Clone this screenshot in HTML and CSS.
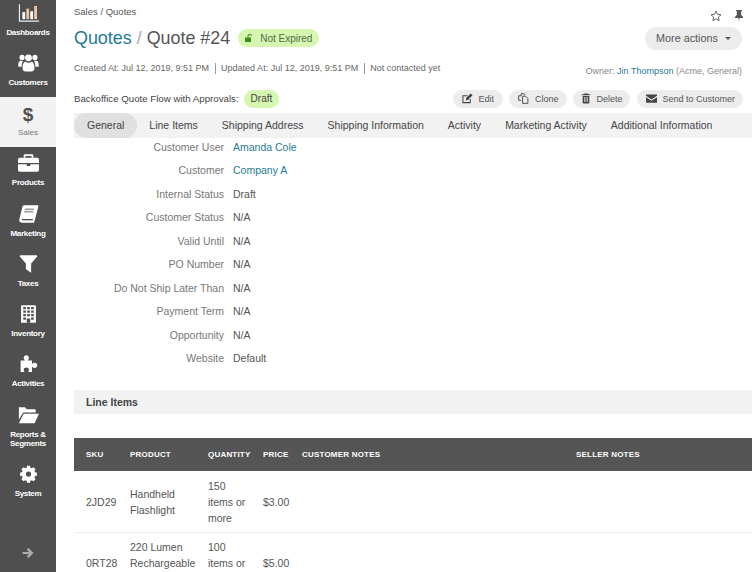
FILE: index.html
```html
<!DOCTYPE html>
<html lang="en">
<head>
<meta charset="utf-8">
<title>Quote #24</title>
<link rel="stylesheet" href="styles.css">
</head>
<body>
<div class="app">
  <nav class="sidebar">
    <a class="nav-item"><svg class="nav-icon" viewBox="0 0 24 20"><path d="M1 0h1.300v18.700H24V20H1z" fill="#e6f2ff"/><path d="M5 9h3.200v8H5z" fill="#fff"/><path d="M9.500 5h3.200v12H9.500z" fill="#f0c4a4"/><path d="M14 8h3.200v9H14z" fill="#fff"/><path d="M18.500 2h3.200v15h-3.200z" fill="#f0c4a4"/></svg><span>Dashboards</span></a>
    <a class="nav-item"><svg class="nav-icon" viewBox="0 0 24 21"><g fill="#fff"><circle cx="4.500" cy="4" r="3"/><circle cx="19.500" cy="4" r="3"/><circle cx="12" cy="4.500" r="4"/><path d="M0 14c0-4 1-6 3-6h2.500c-1 2-1.500 4-1.500 7H1.500C.7 15 0 14.800 0 14z"/><path d="M24 14c0-4-1-6-3-6h-2.500c1 2 1.500 4 1.500 7h2.500c.8 0 1.500-.2 1.500-1z"/><path d="M5 17c0-5 1.500-8 3.500-8 1 .8 2.200 1.200 3.500 1.200s2.500-.4 3.500-1.200c2 0 3.500 3 3.500 8 0 2.500-2 3.500-3.500 3.500h-7C7 20.500 5 19.500 5 17z"/></g></svg><span>Customers</span></a>
    <a class="nav-item active"><span class="dollar">$</span><span>Sales</span></a>
    <a class="nav-item nav-wide"><svg class="nav-icon" viewBox="0 0 24 20"><g fill="#fff"><path d="M8 0h8c1 0 1.500.5 1.500 1.500V4h-2V2h-7v2h-2V1.500C6.500.5 7 0 8 0z"/><path d="M2 4h20c1 0 2 .8 2 2v4H0V6c0-1.200 1-2 2-2z"/><path d="M0 11.500h10v2h4v-2h10V18c0 1.200-1 2-2 2H2c-1 0-2-.8-2-2z"/></g></svg><span>Products</span></a>
    <a class="nav-item"><svg class="nav-icon" viewBox="0 0 24 20"><path d="M7 0h15c1 0 1.500.8 1.200 1.800L19.500 16c-.4 1.500-1 2.500-1 2.500s-.2 1.500 1 1.500H5c-2.500 0-4-1.500-3.500-4L5 2c.3-1.200 1-2 2-2z" fill="#fff"/><path d="M8 4.500h10M7.300 7.500h10" stroke="#4f4f4f" fill="none"/><path d="M4.500 16.500h12.500" stroke="#4f4f4f" stroke-width="1.500" fill="none"/></svg><span>Marketing</span></a>
    <a class="nav-item"><svg class="nav-icon" viewBox="0 0 24 20"><path d="M3 0h18c1 0 1.300 1 .7 1.700L15 9.500V20l-6-4V9.500L2.300 1.700C1.700 1 2 0 3 0z" fill="#fff"/></svg><span>Taxes</span></a>
    <a class="nav-item"><svg class="nav-icon" viewBox="0 0 24 20"><path d="M4.500 0h15c.6 0 1 .4 1 1v18c0 .6-.4 1-1 1h-15c-.6 0-1-.4-1-1V1c0-.6.4-1 1-1z" fill="#fff"/><path d="M6 2h3v2.500H6zM10.500 2h3v2.500h-3zM15 2h3v2.500h-3zM6 6h3v2.500H6zM10.500 6h3v2.500h-3zM15 6h3v2.500h-3zM6 10h3v2.500H6zM10.500 10h3v2.500h-3zM15 10h3v2.500h-3zM6 14h3v2.500H6zM15 14h3v2.500h-3zM10 15h4v5h-4z" fill="#4f4f4f"/></svg><span>Inventory</span></a>
    <a class="nav-item"><svg class="nav-icon" viewBox="0 0 24 20"><path d="M3 6h5C7 5 6.500 4 6.500 2.800 6.500 1 8 0 9.500 0s3 1 3 2.800C12.500 4 12 5 11 6h5v4c1-1 2-1.500 3.200-1.500 1.800 0 2.800 1.500 2.800 3s-1 3-2.800 3c-1.200 0-2.200-.5-3.200-1.500v6h-4.500c.8-1 1-1.500 1-2.500 0-1.500-1.500-2.500-3-2.500s-3 1-3 2.500c0 1 .3 1.500 1 2.500H3z" fill="#fff"/></svg><span>Activities</span></a>
    <a class="nav-item nav-two"><svg class="nav-icon" viewBox="0 0 24 20"><path d="M1 1h7l2 2.500h9c.8 0 1.200.5 1.200 1.200V7H6L1 15z" fill="#fff"/><path d="M6.500 8.500H24l-5 11H1z" fill="#fff"/></svg><span>Reports &amp; Segments</span></a>
    <a class="nav-item"><svg class="nav-icon" viewBox="0 0 24 24"><path fill-rule="evenodd" fill="#fff" d="M10 1h4l.5 2.600 1.900.8 2.200-1.500 2.800 2.800-1.500 2.200.8 1.900 2.600.5v4l-2.600.5-.8 1.900 1.500 2.200-2.800 2.800-2.200-1.500-1.900.8-.5 2.600h-4l-.5-2.600-1.900-.8-2.200 1.500-2.800-2.800 1.500-2.200-.8-1.900-2.600-.5v-4l2.600-.5.8-1.900-1.500-2.200 2.800-2.800 2.200 1.500 1.900-.8zM12 8.500a3.500 3.500 0 1 0 0 7 3.500 3.500 0 0 0 0-7z"/></svg><span>System</span></a>
    <div class="nav-foot"><svg class="nav-arrow" viewBox="0 0 12 12"><path d="M6.500 1l5 5-5 5-1.700-1.700L7 7H.5V5H7L4.800 2.700z" fill="#aaa"/></svg></div>
  </nav>
  <main class="main">
    <div class="page-head">
      <div class="head-top">
        <div class="crumbs">Sales / Quotes</div>
        <div class="head-icons">
          <svg class="ico-star" viewBox="0 0 12 12"><path d="M6 1l1.500 3.300 3.500.4-2.600 2.400.7 3.500L6 8.900l-3.100 1.700.7-3.500L1 4.700l3.500-.4z" fill="none" stroke="#666"/></svg>
          <svg class="ico-pin" viewBox="0 0 10 12"><path d="M2 0h6v1H7.200v4L9 7v1H5.500L5 12l-.5-4H1V7l1.800-2V1H2z" fill="#555"/></svg>
        </div>
      </div>
      <div class="title-row">
        <h1 class="title"><a class="link">Quotes</a> <span class="sep">/</span> Quote #24</h1>
        <span class="pill pill-status"><svg class="ico-lock" viewBox="0 0 10 8"><path d="M0 3.500h6V8H0z" fill="#3f8a1f"/><path d="M3 3.500V2c0-1 .8-1.500 1.700-1.500S6.500 1 6.500 2" fill="none" stroke="#3f8a1f" stroke-width="1.100"/></svg>Not Expired</span>
        <button class="more">More actions<i class="caret"></i></button>
      </div>
      <div class="meta-row">
        <div class="meta"><span>Created At: Jul 12, 2019, 9:51 PM</span><span>Updated At: Jul 12, 2019, 9:51 PM</span><span>Not contacted yet</span></div>
        <div class="owner">Owner: <a class="link">Jin Thompson</a> (Acme, General)</div>
      </div>
      <div class="flow-row">
        <div class="flow">Backoffice Quote Flow with Approvals: <span class="pill pill-draft">Draft</span></div>
        <div class="actions">
          <button class="act"><svg viewBox="0 0 12 12"><path d="M9 6.500V10.500H1V3h5" fill="none" stroke="#444" stroke-width="1.100"/><path d="M4.500 5.500l5-5 2 2-5 5-2.300.3z" fill="#444"/></svg>Edit</button>
          <button class="act act-clone"><svg viewBox="0 0 12 12"><path d="M3.500 3V.8h3l1.200 1.400M3.500 8H.7V3h2.800M5 3.500h3.300l2.500 2.500v5.300H5z" fill="none" stroke="#444"/></svg>Clone</button>
          <button class="act act-delete"><svg viewBox="0 0 12 12"><path d="M4 0h4l.5 1H11v1.200H1V1h2.500zM2 3h8v8c0 .6-.4 1-1 1H3c-.6 0-1-.4-1-1zM3.700 4.300v6h.8v-6zM5.600 4.300v6h.8v-6zM7.500 4.300v6h.8v-6z" fill="#444" fill-rule="evenodd"/></svg>Delete</button>
          <button class="act act-send"><svg class="ico-mail" viewBox="0 0 12 9"><path d="M0 0h12v1.500L6 5.500 0 1.500zM0 3l6 4 6-4v6H0z" fill="#444"/></svg>Send to Customer</button>
        </div>
      </div>
      <div class="tabs">
        <a class="tab tab-on">General</a><a class="tab">Line Items</a><a class="tab">Shipping Address</a><a class="tab">Shipping Information</a><a class="tab">Activity</a><a class="tab">Marketing Activity</a><a class="tab">Additional Information</a>
      </div>
    </div>
    <dl class="fields">
      <div class="field"><dt>Customer User</dt><dd><a class="link">Amanda Cole</a></dd></div>
      <div class="field"><dt>Customer</dt><dd><a class="link">Company A</a></dd></div>
      <div class="field"><dt>Internal Status</dt><dd>Draft</dd></div>
      <div class="field"><dt>Customer Status</dt><dd>N/A</dd></div>
      <div class="field"><dt>Valid Until</dt><dd>N/A</dd></div>
      <div class="field"><dt>PO Number</dt><dd>N/A</dd></div>
      <div class="field"><dt>Do Not Ship Later Than</dt><dd>N/A</dd></div>
      <div class="field"><dt>Payment Term</dt><dd>N/A</dd></div>
      <div class="field"><dt>Opportunity</dt><dd>N/A</dd></div>
      <div class="field"><dt>Website</dt><dd>Default</dd></div>
    </dl>
    <h2 class="section">Line Items</h2>
    <table class="items">
      <thead><tr><th class="c1">Sku</th><th class="c2">Product</th><th class="c3">Quantity</th><th class="c4">Price</th><th class="c5">Customer Notes</th><th>Seller Notes</th></tr></thead>
      <tbody>
        <tr><td>2JD29</td><td>Handheld Flashlight</td><td>150 items or more</td><td>$3.00</td><td></td><td></td></tr>
        <tr class="row-next"><td>0RT28</td><td>220 Lumen Rechargeable Flashlight</td><td>100 items or more</td><td>$5.00</td><td></td><td></td></tr>
      </tbody>
    </table>
  </main>
</div>
</body>
</html>
```
FILE: styles.css
```css
* { box-sizing: border-box; }
html, body { margin: 0; height: 572px; overflow: hidden; background: #fff; }
body { font-family: "Liberation Sans", Arial, sans-serif; font-size: 10.5px; color: #555; }
.app { display: flex; height: 572px; }

.sidebar { width: 56px; flex: none; background: #4f4f4f; display: flex; flex-direction: column; }
.nav-item { height: 50px; flex: none; display: flex; flex-direction: column; align-items: center; color: #fff; font-size: 8px; font-weight: bold; letter-spacing: -.3px; text-align: center; padding-top: 7px; line-height: 9px; }
.nav-item:first-child { height: 47px; padding-top: 4px; }
.nav-icon { width: 21px; height: 18px; margin-bottom: 6px; flex: none; }
.nav-wide { height: 51px; }
.nav-two { height: 60px; padding-top: 8px; }
.active { background: #f2f2f2; color: #777; font-weight: normal; letter-spacing: 0; }
.dollar { font-size: 19px; line-height: 22px; color: #4f4f4f; font-weight: bold; margin-bottom: 2px; }
.nav-foot { margin-top: auto; height: 25px; display: flex; justify-content: center; }
.nav-arrow { width: 12px; height: 12px; }

.main { flex: 1; min-width: 0; padding: 0 2px 0 18px; }
.head-top { display: flex; justify-content: space-between; height: 22px; padding-top: 6px; }
.crumbs { font-size: 9.5px; line-height: 11px; color: #555; }
.head-icons { display: flex; gap: 12px; padding-top: 4px; padding-right: 8px; }
.ico-star { width: 12px; height: 12px; }
.ico-pin { width: 10px; height: 12px; }

.link { color: #1f7a96; text-decoration: none; }
.title-row { display: flex; align-items: center; height: 32px; padding-right: 10px; }
.title { margin: 0; font-size: 17.900px; font-weight: normal; color: #555; line-height: 32px; }
.sep { color: #aaa; }
.pill { display: inline-flex; align-items: center; border-radius: 9px; background: #d6f7b0; height: 18px; font-size: 10px; color: #4f6b4a; }
.pill-status { margin-left: 8px; padding: 0 7px; gap: 5px; }
.ico-lock { width: 10px; height: 8px; }
.more { margin-left: auto; border: 0; height: 23px; width: 97px; border-radius: 12px; background: #ececec; font: 10.8px "Liberation Sans", Arial, sans-serif; color: #555; padding: 0; }
.caret { display: inline-block; margin-left: 7px; border: 3.500px solid transparent; border-top-color: #555; border-bottom: 0; vertical-align: 2px; }

.meta-row { display: flex; justify-content: space-between; align-items: flex-end; height: 22px; padding-right: 10px; }
.meta { font-size: 9px; color: #666; line-height: 11px; padding-bottom: 2px; display: flex; }
.meta span + span { border-left: 1px solid #999; margin-left: 6px; padding-left: 5px; }
.owner { font-size: 9px; color: #888; line-height: 11px; margin-bottom: -1px; }

.flow-row { display: flex; justify-content: space-between; align-items: center; height: 29px; margin-top: 8px; padding-right: 9px; }
.flow { font-size: 9.700px; color: #444; display: flex; align-items: center; gap: 5px; }
.pill-draft { padding: 0 7px; color: #444; }
.actions { display: flex; gap: 6px; }
.act { display: inline-flex; align-items: center; gap: 5px; height: 18px; padding: 0 9px; border: 0; border-radius: 9px; background: #ececec; font: 9px "Liberation Sans", Arial, sans-serif; color: #555; }
.act svg { width: 11px; height: 11px; flex: none; }
.act-clone { gap: 6px; }
.act-delete { padding: 0 8px; }
.act-delete svg { width: 10px; }
.act-send { padding: 0 8px 0 9px; margin-left: 1px; }
.act .ico-mail { width: 11px; height: 9px; }

.tabs { display: flex; background: #f2f2f2; height: 25px; align-items: center; }
.tab { height: 25px; line-height: 25px; font-size: 10.5px; color: #444; padding: 0 12px; }
.tab-on { background: #e0e0e0; border-radius: 13px; padding-right: 13px; padding-left: 13px; }

.fields { margin: -3px 0 0; padding: 0; display: flex; flex-direction: column; }
.field { display: flex; height: 23.500px; align-items: center; font-size: 10.5px; }
dt { width: 150px; text-align: right; color: #777; }
dd { margin: 0 0 0 9px; color: #555; }

.section { margin: 20px 0 24px; height: 24px; background: #f2f2f2; font-size: 10.5px; line-height: 24px; padding-left: 12px; color: #444; }

.items { width: 100%; border-collapse: collapse; table-layout: fixed; }
.items th { background: #555; color: #fff; font-size: 8px; letter-spacing: .2px; text-transform: uppercase; text-align: left; height: 33px; padding: 0 0 0 12px; }
.items th + th { padding-left: 0; }
.c1 { width: 56px; }
.c2 { width: 78px; }
.c3 { width: 55px; }
.c4 { width: 39px; }
.c5 { width: 274px; }
.items td { font-size: 10.5px; line-height: 16px; padding: 7px 12px 6px 0; border-bottom: 1px solid #eee; color: #555; }
.items .row-next td { padding-top: 6px; padding-bottom: 7px; }
.items td:first-child { padding-left: 12px; }
```
